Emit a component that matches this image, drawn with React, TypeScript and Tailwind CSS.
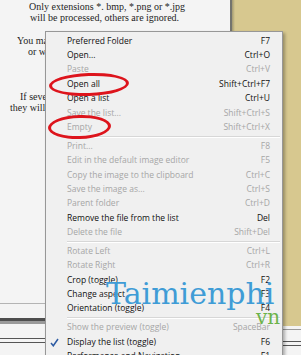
import React from 'react';

type Item = { label: string; keys: string; off?: boolean; checked?: boolean } | 'sep';

const items: Item[] = [
  { label: 'Preferred Folder', keys: 'F7' },
  { label: 'Open...', keys: 'Ctrl+O' },
  { label: 'Paste', keys: 'Ctrl+V', off: true },
  { label: 'Open all', keys: 'Shift+Ctrl+F7' },
  { label: 'Open a list', keys: 'Ctrl+U' },
  { label: 'Save the list...', keys: 'Shift+Ctrl+S', off: true },
  { label: 'Empty', keys: 'Shift+Ctrl+X', off: true },
  'sep',
  { label: 'Print...', keys: 'F8', off: true },
  { label: 'Edit in the default image editor', keys: 'F5', off: true },
  { label: 'Copy the image to the clipboard', keys: 'Ctrl+C', off: true },
  { label: 'Save the image as...', keys: 'Ctrl+S', off: true },
  { label: 'Parent folder', keys: 'Ctrl+D', off: true },
  { label: 'Remove the file from the list', keys: 'Del' },
  { label: 'Delete the file', keys: 'Shift+Del', off: true },
  'sep',
  { label: 'Rotate Left', keys: 'Ctrl+L', off: true },
  { label: 'Rotate Right', keys: 'Ctrl+R', off: true },
  { label: 'Crop (toggle)', keys: 'F2' },
  { label: 'Change aspect', keys: 'F3' },
  { label: 'Orientation (toggle)', keys: 'F4' },
  'sep',
  { label: 'Show the preview (toggle)', keys: 'SpaceBar', off: true },
  { label: 'Display the list (toggle)', keys: 'F6', checked: true },
  { label: 'Performance and Navigation', keys: 'F1' },
];

function ContextMenu() {
  return (
    <div className="absolute left-[45px] top-[31px] w-[238px] bg-[#f0f0f0] border border-[#979797] shadow-[2px_2px_3px_rgba(0,0,0,0.3)] pt-[2px] font-['Open_Sans',sans-serif] text-[8.5px]">
      {items.map((it, i) =>
        it === 'sep' ? (
          <div key={i} className="h-[4.7px] flex flex-col justify-center pl-[21px] pr-[2px]">
            <div className="border-t border-[#d7d7d7]" />
            <div className="border-t border-white" />
          </div>
        ) : (
          <div
            key={i}
            className={`relative flex items-center justify-between h-[14.35px] pl-[21px] pr-[12px] whitespace-nowrap ${
              it.off ? 'text-[#a6a6a6]' : 'text-[#111]'
            }`}
          >
            {it.checked && (
              <svg className="absolute left-[4px] top-[3px]" width="9" height="9" viewBox="0 0 9 9">
                <path d="M1 5 L3.3 7.8 L8 1" fill="none" stroke="#2d5ba3" strokeWidth="1.5" />
              </svg>
            )}
            <span>{it.label}</span>
            <span>{it.keys}</span>
          </div>
        )
      )}
    </div>
  );
}

export default function App() {
  return (
    <div className="relative w-[301px] h-[355px] overflow-hidden flex bg-[#f4f4f4]">
      {/* dialog behind the menu */}
      <div className="w-[232px] h-full flex flex-col border-r-2 border-[#74746e] font-['Liberation_Serif',serif] text-[10px] leading-[10.5px] text-[#1e1e1e] whitespace-nowrap">
        <div className="pt-[2px] pl-[29px]">Only extensions *. bmp, *.png or *.jpg</div>
        <div className="pl-[30px]">will be processed, others are ignored.</div>
        <div className="pt-[13px] pl-[17px]">You may drag and drop here some files</div>
        <div className="pl-[28px]">or whole folders from the explorer.</div>
        <div className="pt-[35px] pl-[20px]">If several files are dropped at once,</div>
        <div className="pl-[10px]">they will be added to the list of files.</div>
        <div className="mt-auto pb-[12px] flex flex-col">
          <div className="h-px bg-[#b4b4b4]" />
          <div className="h-[14px]" />
          <div className="h-[3px] bg-[#4e4e4e]" />
          <div className="h-[3px] bg-[#9a9a9a]" />
          <div className="h-[14px]" />
          <div className="h-px bg-[#555]" />
          <div className="h-[3px]" />
          <div className="h-px bg-[#555]" />
        </div>
      </div>
      <div className="flex-1 flex flex-col">
        <div className="h-[326px] flex bg-[#d7c88f]">
          <div className="w-[3px] bg-gradient-to-r from-[#a39a72] to-[#d7c88f]" />
        </div>
        <div className="flex-1 flex flex-col pt-[3px]">
          <div className="h-px bg-[#9a9a9a]" />
          <div className="h-[11px]" />
          <div className="h-px bg-[#555]" />
          <div className="h-[3px]" />
          <div className="h-px bg-[#555]" />
        </div>
      </div>

      <ContextMenu />

      {/* annotation rings */}
      <div className="absolute left-[49px] top-[73px] w-[80px] h-[23px] rounded-[50%] border-[3px] border-[#dd141c] -rotate-2" />
      <div className="absolute left-[48px] top-[115px] w-[63px] h-[24px] rounded-[50%] border-[3px] border-[#dd141c] -rotate-2" />

      {/* watermark */}
      <div className="absolute left-[106px] top-[279px] font-['DejaVu_Serif',serif] text-[30px] leading-none text-[#3f9cd6]">
        Taimienphi
      </div>
      <div className="absolute left-[256px] top-[307px] font-['DejaVu_Serif',serif] text-[20px] leading-none text-[#6cb34a]">
        vn
      </div>
    </div>
  );
}
